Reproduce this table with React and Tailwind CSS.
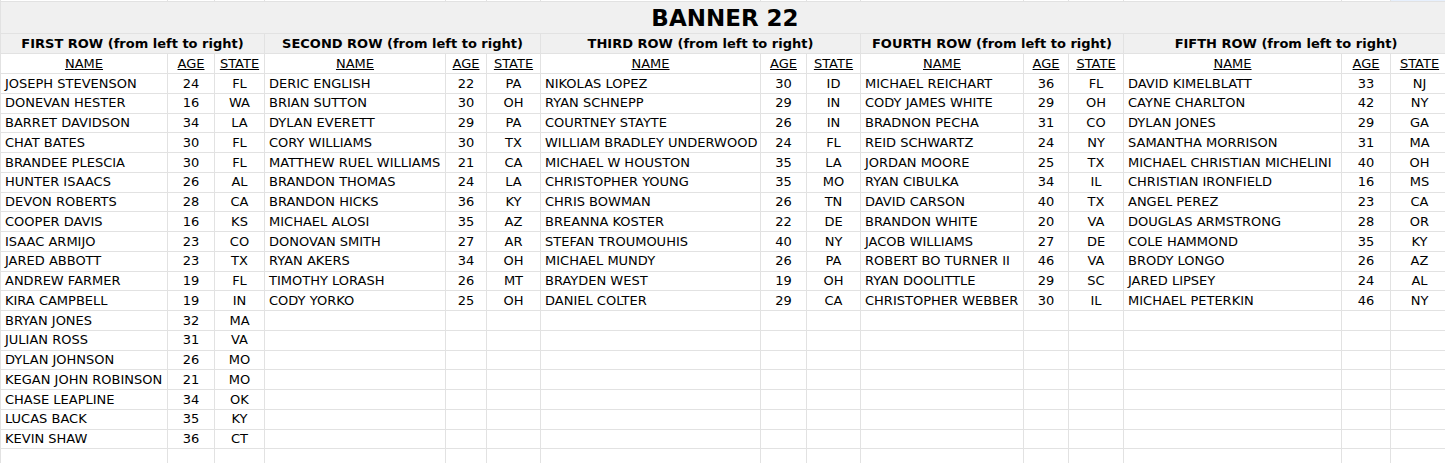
const groups = [
  {
    title: "FIRST ROW (from left to right)",
    rows: [
      ["JOSEPH STEVENSON", 24, "FL"],
      ["DONEVAN HESTER", 16, "WA"],
      ["BARRET DAVIDSON", 34, "LA"],
      ["CHAT BATES", 30, "FL"],
      ["BRANDEE PLESCIA", 30, "FL"],
      ["HUNTER ISAACS", 26, "AL"],
      ["DEVON ROBERTS", 28, "CA"],
      ["COOPER DAVIS", 16, "KS"],
      ["ISAAC ARMIJO", 23, "CO"],
      ["JARED ABBOTT", 23, "TX"],
      ["ANDREW FARMER", 19, "FL"],
      ["KIRA CAMPBELL", 19, "IN"],
      ["BRYAN JONES", 32, "MA"],
      ["JULIAN ROSS", 31, "VA"],
      ["DYLAN JOHNSON", 26, "MO"],
      ["KEGAN JOHN ROBINSON", 21, "MO"],
      ["CHASE LEAPLINE", 34, "OK"],
      ["LUCAS BACK", 35, "KY"],
      ["KEVIN SHAW", 36, "CT"],
    ],
  },
  {
    title: "SECOND ROW (from left to right)",
    rows: [
      ["DERIC ENGLISH", 22, "PA"],
      ["BRIAN SUTTON", 30, "OH"],
      ["DYLAN EVERETT", 29, "PA"],
      ["CORY WILLIAMS", 30, "TX"],
      ["MATTHEW RUEL WILLIAMS", 21, "CA"],
      ["BRANDON THOMAS", 24, "LA"],
      ["BRANDON HICKS", 36, "KY"],
      ["MICHAEL ALOSI", 35, "AZ"],
      ["DONOVAN SMITH", 27, "AR"],
      ["RYAN AKERS", 34, "OH"],
      ["TIMOTHY LORASH", 26, "MT"],
      ["CODY YORKO", 25, "OH"],
    ],
  },
  {
    title: "THIRD ROW (from left to right)",
    rows: [
      ["NIKOLAS LOPEZ", 30, "ID"],
      ["RYAN SCHNEPP", 29, "IN"],
      ["COURTNEY STAYTE", 26, "IN"],
      ["WILLIAM BRADLEY UNDERWOOD", 24, "FL"],
      ["MICHAEL W HOUSTON", 35, "LA"],
      ["CHRISTOPHER YOUNG", 35, "MO"],
      ["CHRIS BOWMAN", 26, "TN"],
      ["BREANNA KOSTER", 22, "DE"],
      ["STEFAN TROUMOUHIS", 40, "NY"],
      ["MICHAEL MUNDY", 26, "PA"],
      ["BRAYDEN WEST", 19, "OH"],
      ["DANIEL COLTER", 29, "CA"],
    ],
  },
  {
    title: "FOURTH ROW (from left to right)",
    rows: [
      ["MICHAEL REICHART", 36, "FL"],
      ["CODY JAMES WHITE", 29, "OH"],
      ["BRADNON PECHA", 31, "CO"],
      ["REID SCHWARTZ", 24, "NY"],
      ["JORDAN MOORE", 25, "TX"],
      ["RYAN CIBULKA", 34, "IL"],
      ["DAVID CARSON", 40, "TX"],
      ["BRANDON WHITE", 20, "VA"],
      ["JACOB WILLIAMS", 27, "DE"],
      ["ROBERT BO TURNER II", 46, "VA"],
      ["RYAN DOOLITTLE", 29, "SC"],
      ["CHRISTOPHER WEBBER", 30, "IL"],
    ],
  },
  {
    title: "FIFTH ROW (from left to right)",
    rows: [
      ["DAVID KIMELBLATT", 33, "NJ"],
      ["CAYNE CHARLTON", 42, "NY"],
      ["DYLAN JONES", 29, "GA"],
      ["SAMANTHA MORRISON", 31, "MA"],
      ["MICHAEL CHRISTIAN MICHELINI", 40, "OH"],
      ["CHRISTIAN IRONFIELD", 16, "MS"],
      ["ANGEL PEREZ", 23, "CA"],
      ["DOUGLAS ARMSTRONG", 28, "OR"],
      ["COLE HAMMOND", 35, "KY"],
      ["BRODY LONGO", 26, "AZ"],
      ["JARED LIPSEY", 24, "AL"],
      ["MICHAEL PETERKIN", 46, "NY"],
    ],
  },
];

const ROWS = 20;
const cell = "border-r border-b border-[#e2e2e2] whitespace-nowrap overflow-hidden";

export default function App() {
  return (
    <div className="w-[1445px] h-[463px] overflow-hidden bg-white font-['DejaVu_Sans',sans-serif] text-[13px] text-black">
      <div className="grid w-[1449px] grid-cols-[168px_47px_50px_181px_41px_54px_220px_46px_54px_163px_45px_55px_218px_49px_58px] grid-rows-[2px_32px_20px_20px_repeat(20,19.75px)]">
        {/* top sliver row */}
        {Array.from({ length: 15 }).map((_, i) => (
          <div
            key={"t" + i}
            className={`${cell} ${i === 0 ? "border-l" : ""} ${i === 14 ? "bg-[#e7f0fd]" : ""}`}
          />
        ))}

        {/* title */}
        <div className="col-span-15 border-b border-l border-[#e2e2e2] bg-[#f0f0f0] flex items-center justify-center">
          <span className="text-[23px] font-bold leading-none pt-px">BANNER 22</span>
        </div>

        {/* group headers */}
        {groups.map((g, i) => (
          <div
            key={g.title}
            className={`col-span-3 ${cell} ${i === 0 ? "border-l" : ""} bg-[#f0f0f0] flex items-center justify-center font-bold`}
          >
            {g.title}
          </div>
        ))}

        {/* column headers */}
        {groups.map((g, i) => (
          <div key={"h" + i} className="contents">
            <div className={`${cell} ${i === 0 ? "border-l" : ""} flex items-center justify-center underline`}>NAME</div>
            <div className={`${cell} flex items-center justify-center underline`}>AGE</div>
            <div className={`${cell} flex items-center justify-center underline`}>STATE</div>
          </div>
        ))}

        {/* data */}
        {Array.from({ length: ROWS }).map((_, r) =>
          groups.map((g, i) => {
            const row = g.rows[r];
            return (
              <div key={r + "-" + i} className="contents">
                <div className={`${cell} ${i === 0 ? "border-l" : ""} flex items-center pl-1`}>{row ? row[0] : ""}</div>
                <div className={`${cell} flex items-center justify-center`}>{row ? row[1] : ""}</div>
                <div className={`${cell} flex items-center justify-center`}>{row ? row[2] : ""}</div>
              </div>
            );
          })
        )}
      </div>
    </div>
  );
}
